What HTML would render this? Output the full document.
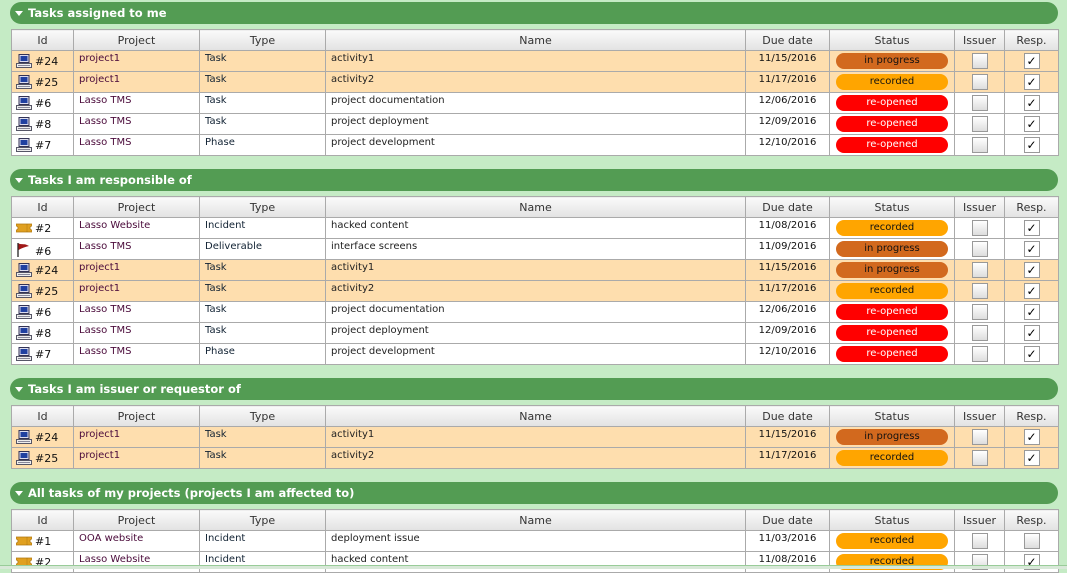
<!DOCTYPE html><html><head><meta charset="utf-8"><style>
body{margin:0;width:1067px;height:568px;background:#c5ebc5;font-family:"DejaVu Sans","Liberation Sans",sans-serif;overflow:hidden;position:relative}
.bar{position:absolute;left:10px;width:1048px;height:22px;background:#539c53;border-radius:11px;color:#fff;font-weight:bold;font-size:11.5px;line-height:22px;box-sizing:border-box;padding-left:18px}
.bar:before{content:"";position:absolute;left:5px;top:9px;border-left:4px solid transparent;border-right:4px solid transparent;border-top:5px solid #fff}
table{position:absolute;left:11px;width:1047px;border-collapse:collapse;table-layout:fixed;font-size:10px}
td,th{border:1px solid #aaa;height:21px;padding:0;white-space:nowrap;overflow:hidden;box-sizing:border-box}
th{background:linear-gradient(#fafafa,#e2e2e2);font-weight:normal;font-size:11px;color:#333;text-align:center}
td{padding-left:5px;vertical-align:top;padding-top:2px}
tr.o td{background:#fedeae}
tr.w td{background:#fff}
td.p{color:#4a0a3a}td.t{color:#123}td.n{color:#222}
td.d{text-align:center;padding-left:0;color:#111}
td.id{padding-left:4px;color:#111;font-size:11px;padding-top:3px}
td.id svg{vertical-align:-3px;margin-right:3px}
td.s{padding:0;vertical-align:middle;text-align:center}
.st{display:block;margin:0 auto;width:112px;height:16px;border-radius:8px;font-size:10px;line-height:16px;text-align:center;color:#111}
.ip{background:#d2691e}.rc{background:#ffa500}.ro{background:#f00;color:#fff}
td.c{padding:0;vertical-align:middle;text-align:center}
.cb{display:inline-block;width:14px;height:14px;border:1px solid #999;background:linear-gradient(#fff,#ddd);vertical-align:middle;font-size:12px;line-height:14px;color:#000}
.cb.k{background:#fff}
</style></head><body>
<svg width="0" height="0" style="position:absolute"><defs>
<symbol id="pc" viewBox="0 0 16 14"><rect x="3" y="0.5" width="10" height="8" fill="#dde" stroke="#335"/><rect x="4.5" y="2" width="7" height="5" fill="#2040a0"/><rect x="0.5" y="9.5" width="15" height="4" fill="#eee" stroke="#556"/><line x1="2" y1="11.5" x2="14" y2="11.5" stroke="#889"/></symbol>
<symbol id="tk" viewBox="0 0 16 14"><path d="M0 3h16v2a2 2 0 0 0 0 4v2H0V9a2 2 0 0 0 0-4z" fill="#e0a020" stroke="#b07810" stroke-width=".8"/><line x1="11" y1="3.5" x2="11" y2="10.5" stroke="#b07810" stroke-dasharray="1 1"/></symbol>
<symbol id="fl" viewBox="0 0 16 16"><line x1="2" y1="1" x2="2" y2="15" stroke="#222" stroke-width="1.3"/><path d="M2.5 1.5C6 3 8 1 13 4 9 5 6 6 2.5 8z" fill="#a01818"/></symbol>
</defs></svg>

<div class="bar" style="top:2px">Tasks assigned to me</div>
<table style="top:29px"><colgroup><col width="62"><col width="126"><col width="126"><col width="420"><col width="84"><col width="125"><col width="50"><col width="54"></colgroup>
<tr><th>Id</th><th>Project</th><th>Type</th><th>Name</th><th>Due date</th><th>Status</th><th>Issuer</th><th>Resp.</th></tr>
<tr class="o"><td class="id"><svg width="16" height="14"><use href="#pc"/></svg>#24</td><td class="p">project1</td><td class="t">Task</td><td class="n">activity1</td><td class="d">11/15/2016</td><td class="s"><span class="st ip">in progress</span></td><td class="c"><span class="cb"></span></td><td class="c"><span class="cb k">✓</span></td></tr>
<tr class="o"><td class="id"><svg width="16" height="14"><use href="#pc"/></svg>#25</td><td class="p">project1</td><td class="t">Task</td><td class="n">activity2</td><td class="d">11/17/2016</td><td class="s"><span class="st rc">recorded</span></td><td class="c"><span class="cb"></span></td><td class="c"><span class="cb k">✓</span></td></tr>
<tr class="w"><td class="id"><svg width="16" height="14"><use href="#pc"/></svg>#6</td><td class="p">Lasso TMS</td><td class="t">Task</td><td class="n">project documentation</td><td class="d">12/06/2016</td><td class="s"><span class="st ro">re-opened</span></td><td class="c"><span class="cb"></span></td><td class="c"><span class="cb k">✓</span></td></tr>
<tr class="w"><td class="id"><svg width="16" height="14"><use href="#pc"/></svg>#8</td><td class="p">Lasso TMS</td><td class="t">Task</td><td class="n">project deployment</td><td class="d">12/09/2016</td><td class="s"><span class="st ro">re-opened</span></td><td class="c"><span class="cb"></span></td><td class="c"><span class="cb k">✓</span></td></tr>
<tr class="w"><td class="id"><svg width="16" height="14"><use href="#pc"/></svg>#7</td><td class="p">Lasso TMS</td><td class="t">Phase</td><td class="n">project development</td><td class="d">12/10/2016</td><td class="s"><span class="st ro">re-opened</span></td><td class="c"><span class="cb"></span></td><td class="c"><span class="cb k">✓</span></td></tr>
</table>

<div class="bar" style="top:169px">Tasks I am responsible of</div>
<table style="top:196px"><colgroup><col width="62"><col width="126"><col width="126"><col width="420"><col width="84"><col width="125"><col width="50"><col width="54"></colgroup>
<tr><th>Id</th><th>Project</th><th>Type</th><th>Name</th><th>Due date</th><th>Status</th><th>Issuer</th><th>Resp.</th></tr>
<tr class="w"><td class="id"><svg width="16" height="14"><use href="#tk"/></svg>#2</td><td class="p">Lasso Website</td><td class="t">Incident</td><td class="n">hacked content</td><td class="d">11/08/2016</td><td class="s"><span class="st rc">recorded</span></td><td class="c"><span class="cb"></span></td><td class="c"><span class="cb k">✓</span></td></tr>
<tr class="w"><td class="id"><svg width="16" height="16"><use href="#fl"/></svg>#6</td><td class="p">Lasso TMS</td><td class="t">Deliverable</td><td class="n">interface screens</td><td class="d">11/09/2016</td><td class="s"><span class="st ip">in progress</span></td><td class="c"><span class="cb"></span></td><td class="c"><span class="cb k">✓</span></td></tr>
<tr class="o"><td class="id"><svg width="16" height="14"><use href="#pc"/></svg>#24</td><td class="p">project1</td><td class="t">Task</td><td class="n">activity1</td><td class="d">11/15/2016</td><td class="s"><span class="st ip">in progress</span></td><td class="c"><span class="cb"></span></td><td class="c"><span class="cb k">✓</span></td></tr>
<tr class="o"><td class="id"><svg width="16" height="14"><use href="#pc"/></svg>#25</td><td class="p">project1</td><td class="t">Task</td><td class="n">activity2</td><td class="d">11/17/2016</td><td class="s"><span class="st rc">recorded</span></td><td class="c"><span class="cb"></span></td><td class="c"><span class="cb k">✓</span></td></tr>
<tr class="w"><td class="id"><svg width="16" height="14"><use href="#pc"/></svg>#6</td><td class="p">Lasso TMS</td><td class="t">Task</td><td class="n">project documentation</td><td class="d">12/06/2016</td><td class="s"><span class="st ro">re-opened</span></td><td class="c"><span class="cb"></span></td><td class="c"><span class="cb k">✓</span></td></tr>
<tr class="w"><td class="id"><svg width="16" height="14"><use href="#pc"/></svg>#8</td><td class="p">Lasso TMS</td><td class="t">Task</td><td class="n">project deployment</td><td class="d">12/09/2016</td><td class="s"><span class="st ro">re-opened</span></td><td class="c"><span class="cb"></span></td><td class="c"><span class="cb k">✓</span></td></tr>
<tr class="w"><td class="id"><svg width="16" height="14"><use href="#pc"/></svg>#7</td><td class="p">Lasso TMS</td><td class="t">Phase</td><td class="n">project development</td><td class="d">12/10/2016</td><td class="s"><span class="st ro">re-opened</span></td><td class="c"><span class="cb"></span></td><td class="c"><span class="cb k">✓</span></td></tr>
</table>

<div class="bar" style="top:378px">Tasks I am issuer or requestor of</div>
<table style="top:405px"><colgroup><col width="62"><col width="126"><col width="126"><col width="420"><col width="84"><col width="125"><col width="50"><col width="54"></colgroup>
<tr><th>Id</th><th>Project</th><th>Type</th><th>Name</th><th>Due date</th><th>Status</th><th>Issuer</th><th>Resp.</th></tr>
<tr class="o"><td class="id"><svg width="16" height="14"><use href="#pc"/></svg>#24</td><td class="p">project1</td><td class="t">Task</td><td class="n">activity1</td><td class="d">11/15/2016</td><td class="s"><span class="st ip">in progress</span></td><td class="c"><span class="cb"></span></td><td class="c"><span class="cb k">✓</span></td></tr>
<tr class="o"><td class="id"><svg width="16" height="14"><use href="#pc"/></svg>#25</td><td class="p">project1</td><td class="t">Task</td><td class="n">activity2</td><td class="d">11/17/2016</td><td class="s"><span class="st rc">recorded</span></td><td class="c"><span class="cb"></span></td><td class="c"><span class="cb k">✓</span></td></tr>
</table>

<div class="bar" style="top:482px">All tasks of my projects (projects I am affected to)</div>
<table style="top:509px"><colgroup><col width="62"><col width="126"><col width="126"><col width="420"><col width="84"><col width="125"><col width="50"><col width="54"></colgroup>
<tr><th>Id</th><th>Project</th><th>Type</th><th>Name</th><th>Due date</th><th>Status</th><th>Issuer</th><th>Resp.</th></tr>
<tr class="w"><td class="id"><svg width="16" height="14"><use href="#tk"/></svg>#1</td><td class="p">OOA website</td><td class="t">Incident</td><td class="n">deployment issue</td><td class="d">11/03/2016</td><td class="s"><span class="st rc">recorded</span></td><td class="c"><span class="cb"></span></td><td class="c"><span class="cb"></span></td></tr>
<tr class="w"><td class="id"><svg width="16" height="14"><use href="#tk"/></svg>#2</td><td class="p">Lasso Website</td><td class="t">Incident</td><td class="n">hacked content</td><td class="d">11/08/2016</td><td class="s"><span class="st rc">recorded</span></td><td class="c"><span class="cb"></span></td><td class="c"><span class="cb k">✓</span></td></tr>
</table>
<div style="position:absolute;left:0;top:565px;width:1067px;height:3px;background:#d8e8d8;border-top:1px solid #9c9"></div>
</body></html>
